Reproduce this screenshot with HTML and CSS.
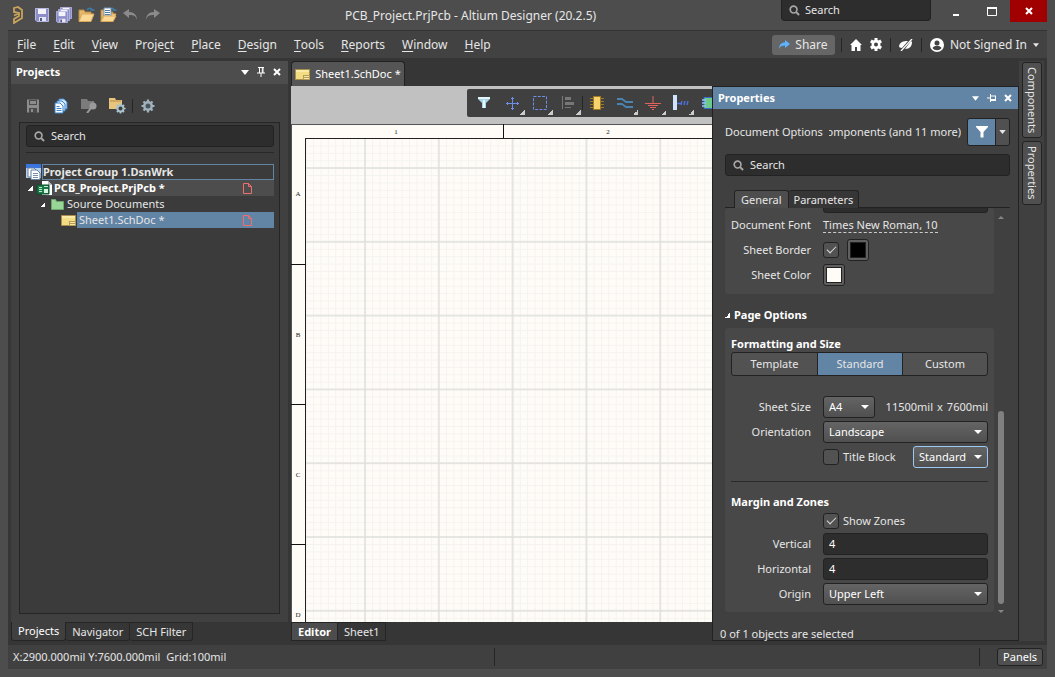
FILE: index.html
```html
<!DOCTYPE html>
<html lang="en">
<head>
<meta charset="utf-8">
<title>PCB_Project.PrjPcb - Altium Designer (20.2.5)</title>
<link rel="stylesheet" href="styles.css">
</head>
<body>
<svg class="defs" aria-hidden="true">
  <symbol id="magnifier" viewBox="0 0 12 12"><circle cx="5" cy="5" r="3.7" fill="none" stroke="#a6a6a6" stroke-width="1.8"/><path d="M7.8 7.8 11 11" stroke="#a6a6a6" stroke-width="2.2"/></symbol>
  <symbol id="caret" viewBox="0 0 8 5"><path d="M0 0h8L4 5z" fill="currentColor"/></symbol>
  <symbol id="cross" viewBox="0 0 8 8"><path d="M1 1l6 6M7 1 1 7" stroke="currentColor" stroke-width="2"/></symbol>
  <symbol id="pin" viewBox="0 0 8 10"><path d="M1 .5h6M2.5 0v6M5.3 0v6M6 0v6M0 6h8M4 6v4" stroke="currentColor" fill="none"/></symbol>
  <symbol id="sheet" viewBox="0 0 15 11"><path d="M.5.5h14v10H.5z" fill="#f3dc82" stroke="#a98f4b"/><path d="M1 1h13v2H1z" fill="#faeaa8"/><path d="M8 6h7v5H8z" fill="#b59a57"/><path d="M9 7.5h5M9 9.5h5" stroke="#f8e9a8"/></symbol>
  <symbol id="file" viewBox="0 0 9 11"><path d="M.5.5h5l3 3v7h-8zM5.5.5v3h3" fill="none" stroke="#ef6e6e"/></symbol>
  <symbol id="gear" viewBox="0 0 14 14"><path d="M7 .5v13M.5 7h13M2.500 2.500l9 9M11.500 2.500l-9 9" stroke="currentColor" stroke-width="2.200"/><circle cx="7" cy="7" r="5" fill="currentColor"/></symbol>
  <symbol id="floppy" viewBox="0 0 14 14"><path d="M.5.5h13v13H2L.5 12z" fill="#8d8ec9" stroke="#b7b8e2"/><path d="M3 1h8v5H3z" fill="#f3f4fb"/><path d="M4 9h7v4H4z" fill="#e6e7f5"/><path d="M5 10h2v3H5z" fill="#55578f"/></symbol>
  <symbol id="open" viewBox="0 0 17 16"><path d="M1 14V3h5l1 2h6v3" fill="#e3b76d" stroke="#b88d45"/><path d="M1 14.5 4 7h12l-3 7.5z" fill="#fbd896" stroke="#d9a957"/><path d="M9 3c2-3 5-2 5.500 1M12.500 3h4" fill="none" stroke="#3d7ba8" stroke-width="1.4"/></symbol>
</svg>
<div class="window">
  <header class="titlebar">
    <div class="quick">
      <svg class="logo" width="12" height="18" viewBox="0 0 12 18"><path d="M1 2 5 1l4 3v8l-8 5v-4l5-3V7L1 6zM1 9.500l5-2" fill="none" stroke="#c9a45a" stroke-width="1.800"/></svg>
      <button aria-label="Save"><svg width="14" height="14"><use href="#floppy"/></svg></button>
      <button aria-label="Save all"><svg width="16" height="16" viewBox="0 0 16 16"><use href="#floppy" x="4" y="0" width="12" height="12"/><use href="#floppy" x="2" y="2" width="12" height="12"/><use href="#floppy" x="0" y="4" width="12" height="12"/></svg></button>
      <button aria-label="Open"><svg width="17" height="16"><use href="#open"/></svg></button>
      <button aria-label="Open project"><svg width="17" height="16" viewBox="0 0 17 16"><use href="#open"/><path d="M4 1h7v8H4z" fill="#fff" stroke="#7295b5"/><path d="M5 3.5h5M5 5.5h5M5 7.5h5" stroke="#557ba0"/><path d="M1 14.5 4 9h12l-3 5.5z" fill="#fbd896" stroke="#d9a957"/></svg></button>
      <button aria-label="Undo"><svg width="15" height="11" viewBox="0 0 15 11"><path d="M0 4 6 0v3c5 0 8 3 8 8-1-4-3-5-8-5v3z" fill="#8b8b8b"/></svg></button>
      <button aria-label="Redo"><svg width="15" height="11" viewBox="0 0 15 11"><path d="M15 4 9 0v3C4 3 1 6 1 11c1-4 3-5 8-5v3z" fill="#8b8b8b"/></svg></button>
    </div>
    <h1>PCB_Project.PrjPcb - Altium Designer (20.2.5)</h1>
    <label class="search top-search"><svg width="11" height="11"><use href="#magnifier"/></svg><input type="text" placeholder="Search" aria-label="Search"></label>
    <div class="winbtns">
      <button aria-label="Minimize"><svg width="10" height="10" viewBox="0 0 10 10"><path d="M2 8h6v2H2z" fill="#fff"/></svg></button>
      <button aria-label="Maximize"><svg width="10" height="9" viewBox="0 0 10 9"><path d="M.5 1v7.5h9V1" fill="none" stroke="#fff"/><path d="M0 0h10v2H0z" fill="#fff"/></svg></button>
      <button class="close" aria-label="Close"><svg width="8" height="8"><use href="#cross"/></svg></button>
    </div>
  </header>

  <nav class="menubar">
    <div class="menus">
      <button><u>F</u>ile</button><button><u>E</u>dit</button><button><u>V</u>iew</button><button>Proje<u>c</u>t</button><button><u>P</u>lace</button><button><u>D</u>esign</button><button><u>T</u>ools</button><button><u>R</u>eports</button><button><u>W</u>indow</button><button><u>H</u>elp</button>
    </div>
    <div class="account">
      <button class="share"><svg width="11" height="9" viewBox="0 0 11 9"><path d="M6 0 11 4 6 8V5.500C3 5.500 1 6 0 9 0 5 2 2.500 6 2.500z" fill="#5fb2ff"/></svg>Share</button>
      <span class="vsep"></span>
      <button aria-label="Home"><svg width="12" height="12" viewBox="0 0 12 12"><path d="M6 0 12 6h-1.500v6H7V8H5v4H1.500V6H0z" fill="#fff"/></svg></button>
      <button aria-label="Settings"><svg width="12" height="13" viewBox="0 0 12 13"><path d="M4.500 0h3v2l1 .6 1.800-1L12 4.200l-1.600 1v2.600l1.600 1-1.700 2.600-1.800-1-1 .6v2h-3v-2l-1-.6-1.800 1L0 8.800l1.600-1V5.200L0 4.200l1.700-2.600 1.800 1 1-.6z" fill="#fff"/><circle cx="6" cy="6.500" r="2" fill="#424242"/></svg></button>
      <span class="vsep"></span>
      <button aria-label="Notifications"><svg width="14" height="12" viewBox="0 0 14 12"><path d="M0 7c1-4 4-5 9-5L3 9C1 9 0 8 0 7zM6 10c5 0 7-3 7-7l-1-1z" fill="#fff"/><path d="M13 0 2 12" stroke="#fff" stroke-width="1.300"/></svg></button>
      <span class="vsep"></span>
      <button class="user"><svg width="14" height="14" viewBox="0 0 14 14"><circle cx="7" cy="7" r="7" fill="#fff"/><circle cx="7" cy="5" r="2.500" fill="#424242"/><path d="M2.500 10c2-3 7-3 9 0-2 3-7 3-9 0z" fill="#424242"/></svg>Not Signed In<svg class="tiny" width="6" height="4"><use href="#caret"/></svg></button>
    </div>
  </nav>

  <main class="workspace">
    <aside class="left">
      <div class="phead"><h2>Projects</h2>
        <button aria-label="Menu"><svg width="8" height="5"><use href="#caret"/></svg></button>
        <button aria-label="Pin"><svg width="8" height="10"><use href="#pin"/></svg></button>
        <button aria-label="Close panel"><svg width="8" height="8"><use href="#cross"/></svg></button>
      </div>
      <div class="pbody">
        <div class="ptools">
          <button aria-label="Save"><svg width="14" height="14" viewBox="0 0 14 14"><path d="M1 .5h12v13H1z" fill="#8c8c8c"/><path d="M3 1h8v5H3zM3 9h8v5H3z" fill="#4b4b4b"/><path d="M4 2h6v3H4zM5 10h2v3H5z" fill="#8c8c8c"/></svg></button>
          <button aria-label="Copy"><svg width="14" height="16" viewBox="0 0 14 16"><path d="M5 1h5l3 3v7H5z" fill="#cfe4fb" stroke="#3b85cc"/><path d="M3 3h5l3 3v7H3z" fill="#e4f0fd" stroke="#3b85cc"/><path d="M1 5h5l3 3v7H1z" fill="#fff" stroke="#3b85cc"/><path d="M2.500 8.500h3M2.500 10.500h5M2.500 12.500h5" stroke="#3b85cc"/></svg></button>
          <button aria-label="Find in project"><svg width="17" height="14" viewBox="0 0 17 14"><path d="M0 0h6l1 2h6v8H0z" fill="#7b7b7b"/><circle cx="12" cy="7" r="3.500" fill="#9b9b9b"/><path d="m10 9-4 5" stroke="#9b9b9b" stroke-width="2"/></svg></button>
          <button aria-label="Project options"><svg width="17" height="16" viewBox="0 0 17 16"><path d="M0 0h6l1 2h6v9H0z" fill="#e9c47d"/><path d="M1 3h11" stroke="#b48c49"/><svg x="6" y="5" width="11" height="11" color="#a9c1cd"><use href="#gear"/></svg><circle cx="11.500" cy="10.500" r="2" fill="#404040"/></svg></button>
          <span class="vsep"></span>
          <button aria-label="Settings" class="bluegear"><svg width="14" height="14" viewBox="0 0 14 14"><use href="#gear"/><circle cx="7" cy="7" r="2.500" fill="#4a545a"/></svg></button>
        </div>
        <div class="treebox">
          <label class="search"><svg width="11" height="11"><use href="#magnifier"/></svg><input type="text" placeholder="Search" aria-label="Search projects"></label>
          <ul class="tree">
            <li class="r1"><svg width="16" height="16" viewBox="0 0 16 16"><path d="M0 0h15v14H0z" fill="#b9cff0"/><path d="M0 0h15v4H0z" fill="#3a74e0"/><path d="M2 4h6l2 2v7H2z" fill="#fff" stroke="#65809c"/><path d="M5 6h6l3 3v6.500H5z" fill="#fff" stroke="#65809c"/><path d="M7 9.500h5M7 11.500h5M7 13.500h5" stroke="#7892ac"/></svg><b>Project Group 1.DsnWrk</b></li>
            <li class="r2"><span class="tw"></span><svg width="16" height="15" viewBox="0 0 16 15"><path d="M6 0h6l4 4v10H6z" fill="#fff"/><path d="M12 0v4h4" fill="#b9b9c4"/><path d="M1 4h12v9H1z" fill="#1c7a4a" stroke="#0d4d2b"/><path d="M3 6.500h3M3 8.500h3M3 10.500h3M8 5.500h4" stroke="#b8f0ce"/><path d="M8 8h4v4H8z" fill="#d5f5df"/></svg><b>PCB_Project.PrjPcb *</b><svg class="mark" width="9" height="11"><use href="#file"/></svg></li>
            <li class="r3"><span class="tw"></span><svg width="13" height="11" viewBox="0 0 13 11"><path d="M.5.5h4l1 2h7v8H.5z" fill="#98d698" stroke="#6ba76d"/></svg><span>Source Documents</span></li>
            <li class="r4"><svg width="15" height="11"><use href="#sheet"/></svg><span>Sheet1.SchDoc *</span><svg class="mark" width="9" height="11"><use href="#file"/></svg></li>
          </ul>
        </div>
      </div>
      <div class="btabs"><button class="on">Projects</button><button>Navigator</button><button>SCH Filter</button></div>
    </aside>

    <section class="editor">
      <div class="doctabs"><button><svg width="15" height="11"><use href="#sheet"/></svg>Sheet1.SchDoc *</button></div>
      <div class="canvas">
        <div class="etools">
          <button aria-label="Filter"><svg width="14" height="14" viewBox="0 0 14 14"><path d="M1 1h12v2L9 7v5H5V7L1 3z" fill="#a8d4e4"/><path d="M1 1h12v2H1zM6 4h2v8H6z" fill="#e4f7fd"/></svg></button>
          <button class="more" aria-label="Move"><svg width="13" height="13" viewBox="0 0 13 13"><path d="M6.500 0v13M0 6.500h13M5 1.500h3M5 11.500h3M1.500 5v3M11.500 5v3" stroke="#6f8ee8"/></svg></button>
          <button class="more" aria-label="Select"><svg width="14" height="14" viewBox="0 0 14 14"><path d="M.5.5h13v13H.5z" fill="none" stroke="#6f8ee8" stroke-dasharray="3 1.300"/></svg></button>
          <button class="more" aria-label="Align"><svg width="14" height="14" viewBox="0 0 14 14"><path d="M1.500 0v13" stroke="#777"/><path d="M4 1h6v3H4zM4 6h9v3H4z" fill="#777"/><path d="M4 11.500h6" stroke="#777"/></svg></button>
          <span class="vsep"></span>
          <button aria-label="Part"><svg width="14" height="14" viewBox="0 0 14 14"><path d="M0 2.500h14M0 5.500h14M0 8.500h14M0 11.500h14" stroke="#9b7b30"/><path d="M3.500.5h7v13h-7z" fill="#fbd36c" stroke="#a27c23"/></svg></button>
          <button class="more" aria-label="Wire"><svg width="16" height="12" viewBox="0 0 16 12"><path d="M0 2h5l4 3h7M0 7h5l4 3h7" fill="none" stroke="#4a82b0" stroke-width="1.800"/></svg></button>
          <button class="more" aria-label="Power port"><svg width="16" height="14" viewBox="0 0 16 14"><path d="M8 0v7M0 7.500h16M3 9.500h10M5 11.500h6M7 13.500h2" stroke="#e0645c"/></svg></button>
          <button class="more" aria-label="Harness"><svg width="16" height="16" viewBox="0 0 16 16"><path d="M0 0h4v15H0z" fill="#cfe3ff"/><path d="M4 8.500h4M8 10l1-4M11 10l1-4M14 10l1-4" stroke="#4d70d8" stroke-width="1.400"/></svg></button>
          <button aria-label="Sheet symbol"><svg width="14" height="12" viewBox="0 0 14 12"><path d="M2 .5h12v11H2z" fill="#6cca8a" stroke="#3c6fc8"/><path d="M0 3h4M0 6h4M0 9h4" stroke="#8fc2ff" stroke-width="1.500"/></svg></button>
        </div>
        <svg class="paper" aria-label="Schematic sheet">
          <defs>
            <pattern id="minor" x="0" y="43.700" width="7.380" height="7.380" patternUnits="userSpaceOnUse"><path d="M0 .5h8M.5 0v8" stroke="#f4f3ef" fill="none"/></pattern>
            <pattern id="major" x="73" y="43" width="73.800" height="73.800" patternUnits="userSpaceOnUse"><path d="M0 1h74M1 0v74" stroke="#e0dfdb" stroke-width="1.500" fill="none"/></pattern>
          </defs>
          <rect width="100%" height="100%" fill="#fffcf7"/>
          <rect x="15" y="15" width="100%" height="100%" fill="url(#minor)"/>
          <rect x="15" y="15" width="100%" height="100%" fill="url(#major)"/>
          <rect x=".5" y=".5" width="200%" height="200%" fill="none" stroke="#555"/>
          <rect x="14.500" y="14.500" width="200%" height="200%" fill="none" stroke="#222"/>
          <path d="M212.500 0v14M0 140.500h15M0 280.500h15M0 420.500h15" stroke="#111"/>
          <g class="zones"><text x="105" y="10">1</text><text x="317" y="10">2</text><text x="7" y="72">A</text><text x="7" y="213">B</text><text x="7" y="353">C</text><text x="7" y="493">D</text></g>
        </svg>
      </div>
      <div class="etabs"><button class="on">Editor</button><button>Sheet1</button></div>
    </section>

    <section class="props">
      <div class="phead blue"><h2>Properties</h2>
        <button aria-label="Menu"><svg width="7" height="5"><use href="#caret"/></svg></button>
        <button aria-label="Dock"><svg width="9" height="8" viewBox="0 0 9 8"><path d="M0 4h3M3.500 0v8M3 2h6M3 5.500h6M3 6.500h6M8.500 2v5" stroke="#fff"/></svg></button>
        <button aria-label="Close properties"><svg width="8" height="8"><use href="#cross"/></svg></button>
      </div>
      <div class="inner">
        <div class="scope"><span>Document Options</span><span class="cut"><span>Components (and 11 more)</span></span>
          <div class="fbtn"><button class="f1" aria-label="Filter"><svg width="12" height="12" viewBox="0 0 12 12"><path d="M0 0h12v1L7.500 6v5.500h-3V6L0 1z" fill="#fff"/></svg></button><button class="f2" aria-label="Filter options"><svg width="7" height="4"><use href="#caret"/></svg></button></div>
        </div>
        <label class="search"><svg width="11" height="11"><use href="#magnifier"/></svg><input type="text" placeholder="Search" aria-label="Search properties"></label>
        <div class="ptabs"><button class="on">General</button><button>Parameters</button></div>
        <div class="scroll">
          <div class="groups">
            <div class="group first">
              <div class="row clipped"><span></span><input class="field" type="text" aria-label="Grid"></div>
              <div class="row"><span class="lab">Document Font</span><span><a href="#font">Times New Roman, 10</a></span></div>
              <div class="row"><label class="lab" for="border">Sheet Border</label><span class="line"><input id="border" type="checkbox" checked><button class="swatch" aria-label="Border color"><i class="black"></i></button></span></div>
              <div class="row"><span class="lab">Sheet Color</span><span class="line"><button class="swatch" aria-label="Sheet color"><i class="cream"></i></button></span></div>
            </div>
            <h3><span class="tw"></span>Page Options</h3>
            <div class="group second">
              <h4>Formatting and Size</h4>
              <div class="seg"><button>Template</button><button class="on">Standard</button><button>Custom</button></div>
              <div class="row"><label class="lab" for="size">Sheet Size</label><span class="line between"><span class="sel small"><select id="size"><option>A4</option></select></span><span class="dims"><span>11500mil</span><span>x</span><span>7600mil</span></span></span></div>
              <div class="row"><label class="lab" for="orient">Orientation</label><span class="sel"><select id="orient"><option>Landscape</option></select></span></div>
              <div class="row"><span></span><span class="line between"><label class="chk"><input type="checkbox">Title Block</label><span class="sel std"><select aria-label="Title block style"><option>Standard</option></select></span></span></div>
              <hr>
              <h4>Margin and Zones</h4>
              <div class="row zonesrow"><span></span><label class="chk"><input type="checkbox" checked>Show Zones</label></div>
              <div class="row"><label class="lab" for="v">Vertical</label><input class="field" id="v" type="text" value="4"></div>
              <div class="row"><label class="lab" for="h">Horizontal</label><input class="field" id="h" type="text" value="4"></div>
              <div class="row"><label class="lab" for="o">Origin</label><span class="sel"><select id="o"><option>Upper Left</option></select></span></div>
            </div>
          </div>
          <div class="bar"><svg width="6" height="3" viewBox="0 0 6 3"><path d="M0 3h6L3 0z" fill="#858585"/></svg><span class="thumb"></span><svg width="6" height="3" viewBox="0 0 6 3"><path d="M0 0h6L3 3z" fill="#858585"/></svg></div>
        </div>
      </div>
      <div class="count">0 of 1 objects are selected</div>
    </section>

    <aside class="rail"><button>Components</button><button>Properties</button></aside>
  </main>

  <footer class="status"><span>X:2900.000mil Y:7600.000mil</span><span class="grid">Grid:100mil</span><span class="vsep mid"></span><span class="vsep end"></span><button>Panels</button></footer>
</div>
</body>
</html>
```
FILE: styles.css
```css
* { box-sizing: border-box; }
html, body { height: 100%; margin: 0; }
body { font: 11px/16px "Noto Sans", "Open Sans", sans-serif; color: #e6e6e6; background: #4d4d4d; overflow: hidden; }
button, input, select { font: inherit; color: inherit; margin: 0; padding: 0; border: 0; background: none; }
button { display: flex; align-items: center; justify-content: center; white-space: nowrap; }
svg { flex: none; display: block; }
h1, h2, h3, h4, ul { margin: 0; padding: 0; font-size: 11px; }
.defs { position: absolute; width: 0; height: 0; }
.vsep { width: 1px; height: 14px; background: #252525; flex: none; }

.window { height: 100vh; display: flex; flex-direction: column; padding: 0 8px 8px; }

.titlebar { height: 31px; display: flex; align-items: flex-start; border-bottom: 1px solid #333; }
.quick { display: flex; align-items: center; gap: 6px; height: 29px; padding-left: 5px; }
.quick .logo { margin-right: 3px; }
.quick button { width: 16px; height: 20px; }
.titlebar h1 { flex: 1; text-align: center; font-size: 12px; font-weight: 400; line-height: 31px; white-space: nowrap; }
.search { display: flex; align-items: center; gap: 6px; height: 22px; padding: 0 7px; background: #2d2d2d; border: 1px solid #222; border-radius: 3px; }
.search input { flex: 1; min-width: 0; outline: none; }
.search input::placeholder { color: #e6e6e6; opacity: 1; }
.top-search { width: 150px; height: 21px; border-top: 0; border-radius: 0 0 4px 4px; gap: 5px; }
.winbtns { display: flex; padding-left: 7px; }
.winbtns button { width: 36px; height: 22px; }
.winbtns .close { width: 37px; background: #a00000; color: #fff; }

.menubar { height: 27px; flex: none; display: flex; justify-content: space-between; align-items: center; background: #424242; padding: 0 8px 0 9px; font-size: 12px; }
.menus { display: flex; gap: 17px; }
.menus u { text-underline-offset: 2px; }
.account { display: flex; align-items: center; gap: 8px; }
.share { width: 63px; height: 20px; background: #666; border-radius: 3px; gap: 5px; margin-right: -2px; }
.user { gap: 6px; }

.workspace { flex: 1; min-height: 0; display: flex; background: #363636; padding: 3px 3px 4px; }

.left { width: 277px; flex: none; display: flex; flex-direction: column; }
.phead { height: 23px; flex: none; display: flex; align-items: center; gap: 8px; padding: 0 7px 1px 5px; background: #4d4d4d; color: #fff; }
.phead h2 { flex: 1; }
.phead.blue { height: 22px; background: #6284a5; padding: 0 6px 0 5px; }
.pbody { flex: 1; min-height: 0; display: flex; flex-direction: column; background: #404040; padding: 0 8px 8px; }
.ptools { height: 38px; flex: none; display: flex; align-items: center; gap: 14px; padding: 6px 0 0 7px; }
.ptools button { width: 14px; height: 16px; }
.ptools .vsep { margin: 0 -6px; }
.bluegear { color: #a0b2bc; }
.treebox { flex: 1; background: #3b3b3b; border: 1px solid #252525; padding: 2px 5px 0 6px; }
.tree { list-style: none; margin-top: 5px; padding-top: 11px; border-top: 1px solid #282828; }
.tree li { height: 16px; display: flex; align-items: center; line-height: 16px; }
.tree .mark { margin: 0 22px 0 auto; }
.r1 b { flex: 1; border: 1px solid #6284a5; line-height: 14px; }
.r2 { background: linear-gradient(90deg, transparent 20px, #4d4d4d 20px); gap: 2px; padding-left: 2px; color: #fff; }
.r3 { gap: 3px; padding-left: 14px; }
.r4 { background: linear-gradient(90deg, transparent 51px, #6284a5 51px); gap: 3px; padding-left: 35px; }
.tw { width: 5px; height: 5px; flex: none; background: linear-gradient(135deg, transparent 50%, #fff 50%); }
.r2 .tw { margin-right: 1px; }
.r3 .tw { margin-right: 3px; }
.btabs, .etabs { display: flex; height: 19px; flex: none; }
.btabs button, .etabs button { padding: 0 6px; border: 1px solid #252525; border-left: 0; border-radius: 0 0 3px 3px; }
.btabs .on { background: #404040; border-top: 0; border-left: 1px solid #252525; color: #fff; }

.editor { flex: 1; min-width: 0; margin-left: 3px; display: flex; flex-direction: column; }
.doctabs { height: 25px; flex: none; display: flex; }
.doctabs button { width: 114px; background: #555; border: 1px solid #222; border-bottom: 0; border-radius: 4px 4px 0 0; gap: 5px; color: #fff; }
.canvas { flex: 1; min-height: 0; display: flex; flex-direction: column; background: #c1c1c1; overflow: hidden; }
.etools { height: 28px; flex: none; align-self: flex-start; display: flex; align-items: center; margin: 3px 0 7px 176px; padding-left: 3px; background: #404040; border-radius: 2px; }
.etools button { width: 28px; height: 28px; position: relative; flex: none; }
.etools .more::after { content: ""; position: absolute; right: 1px; bottom: 2px; width: 5px; height: 5px; background: linear-gradient(135deg, transparent 50%, #ccc 50%); }
.paper { flex: 1; width: 100%; min-height: 0; }
.zones text { font: 7px "Liberation Serif", serif; fill: #222; text-anchor: middle; }
.etabs button { border-radius: 0; }
.etabs .on { background: #4d4d4d; font-weight: 700; color: #fff; border-left: 1px solid #252525; }

.props { width: 307px; flex: none; margin-top: 25px; display: flex; flex-direction: column; background: #404040; border: 1px solid #222; }
.inner { flex: 1; min-height: 0; display: flex; flex-direction: column; padding: 9px 8px 0 12px; }
.scope { height: 28px; flex: none; display: flex; align-items: center; gap: 6px; margin-bottom: 8px; white-space: nowrap; }
.cut { flex: 1; min-width: 0; overflow: hidden; display: flex; justify-content: flex-end; }
.fbtn { display: flex; height: 28px; width: 43px; border: 1px solid #222; border-radius: 3px; overflow: hidden; }
.f1 { flex: 1; background: #6284a5; }
.f2 { width: 14px; background: #505050; border-left: 1px solid #222; }
.inner > .search { flex: none; }
.ptabs { display: flex; flex: none; padding-left: 9px; margin-top: 14px; height: 18px; border-bottom: 1px solid #222; }
.ptabs button { height: 18px; padding: 0 6px; border: 1px solid #222; border-bottom: 0; border-radius: 3px 3px 0 0; background: #363636; }
.ptabs button + button { border-left: 0; padding: 0 5px; }
.ptabs .on { background: #4d4d4d; }
.scroll { flex: 1; min-height: 0; display: flex; gap: 2px; overflow: hidden; }
.groups { flex: 1; min-width: 0; }
.group { background: #484848; border-radius: 3px; padding: 0 6px; overflow: hidden; }
.row { display: grid; grid-template-columns: 80px 1fr; column-gap: 12px; align-items: center; min-height: 25px; }
.lab { text-align: right; white-space: nowrap; }
.row a { color: inherit; text-decoration: none; border-bottom: 1px dashed #ccc; }
.line { display: flex; align-items: center; gap: 8px; }
.between { justify-content: space-between; }
.first { height: 86px; }
.first .clipped { height: 22px; min-height: 0; margin: -17px 0 -1px; }
.field { width: 100%; height: 22px; padding: 0 5px; background: #2d2d2d; border: 1px solid #222; border-radius: 3px; color: #fff; }
input[type="checkbox"] { appearance: none; width: 16px; height: 16px; flex: none; border: 1px solid #222; border-radius: 3px; background: #525252; display: grid; place-items: center; }
input[type="checkbox"]:checked::after { content: ""; width: 8px; height: 4px; margin-top: -3px; border: solid #ddd; border-width: 0 0 1px 1px; transform: rotate(-45deg); }
.chk { display: flex; align-items: center; gap: 4px; white-space: nowrap; }
.swatch { width: 22px; height: 22px; border: 1px solid #222; border-radius: 3px; background: #606060; }
.swatch i { width: 16px; height: 16px; border: 1px solid #222; }
.black { background: #000; }
.cream { background: #fffcf7; }
h3 { display: flex; align-items: center; gap: 4px; height: 34px; padding-top: 8px; color: #fff; }
.second { padding-top: 8px; padding-bottom: 6px; }
h4 { line-height: 16px; color: #fff; }
.seg { display: grid; grid-template-columns: 1fr 1fr 1fr; height: 24px; border: 1px solid #222; border-radius: 3px; overflow: hidden; margin-bottom: 18px; background: #525252; }
.seg button + button { border-left: 1px solid #222; }
.seg .on { background: #6284a5; }
.sel { display: block; position: relative; height: 22px; }
.sel select { appearance: none; width: 100%; height: 22px; padding: 0 5px; border: 1px solid #222; border-radius: 3px; background: linear-gradient(#646464, #505050); color: #fff; }
.sel::after { content: ""; position: absolute; right: 6px; top: 9px; border: solid transparent; border-width: 4px 4px 0; border-top-color: #fff; pointer-events: none; }
.small { width: 52px; }
.std { width: 75px; }
.std select { border-color: #9cc8f5; }
.dims { display: flex; gap: 4px; white-space: nowrap; }
hr { margin: 12px 0; border: 0; border-top: 1px solid #2b2b2b; }
.second .zonesrow { min-height: 21px; }
.bar { width: 14px; flex: none; display: flex; flex-direction: column; align-items: center; padding: 8px 4px 0 0; }
.thumb { width: 6px; height: 193px; margin: auto 0 6px; border-radius: 3px; background: #808080; }
.count { height: 27px; flex: none; padding: 13px 7px 0; line-height: 16px; white-space: nowrap; }

.rail { width: 25px; flex: none; background: #404040; padding: 1px 2px 0 3px; display: flex; flex-direction: column; gap: 3px; }
.rail button { writing-mode: vertical-rl; width: 20px; padding: 4px 0; border: 1px solid #222; border-radius: 3px; background: #505050; }

.status { height: 24px; flex: none; display: flex; align-items: center; background: #404040; padding: 0 4px 0 5px; }
.status .grid { margin-left: 6px; }
.status .mid { margin-left: 268px; height: 18px; }
.status .end { margin-left: auto; height: 18px; }
.status button { height: 18px; padding: 0 5px; margin-left: 17px; border: 1px solid #222; border-radius: 3px; background: #505050; color: #fff; }
```
